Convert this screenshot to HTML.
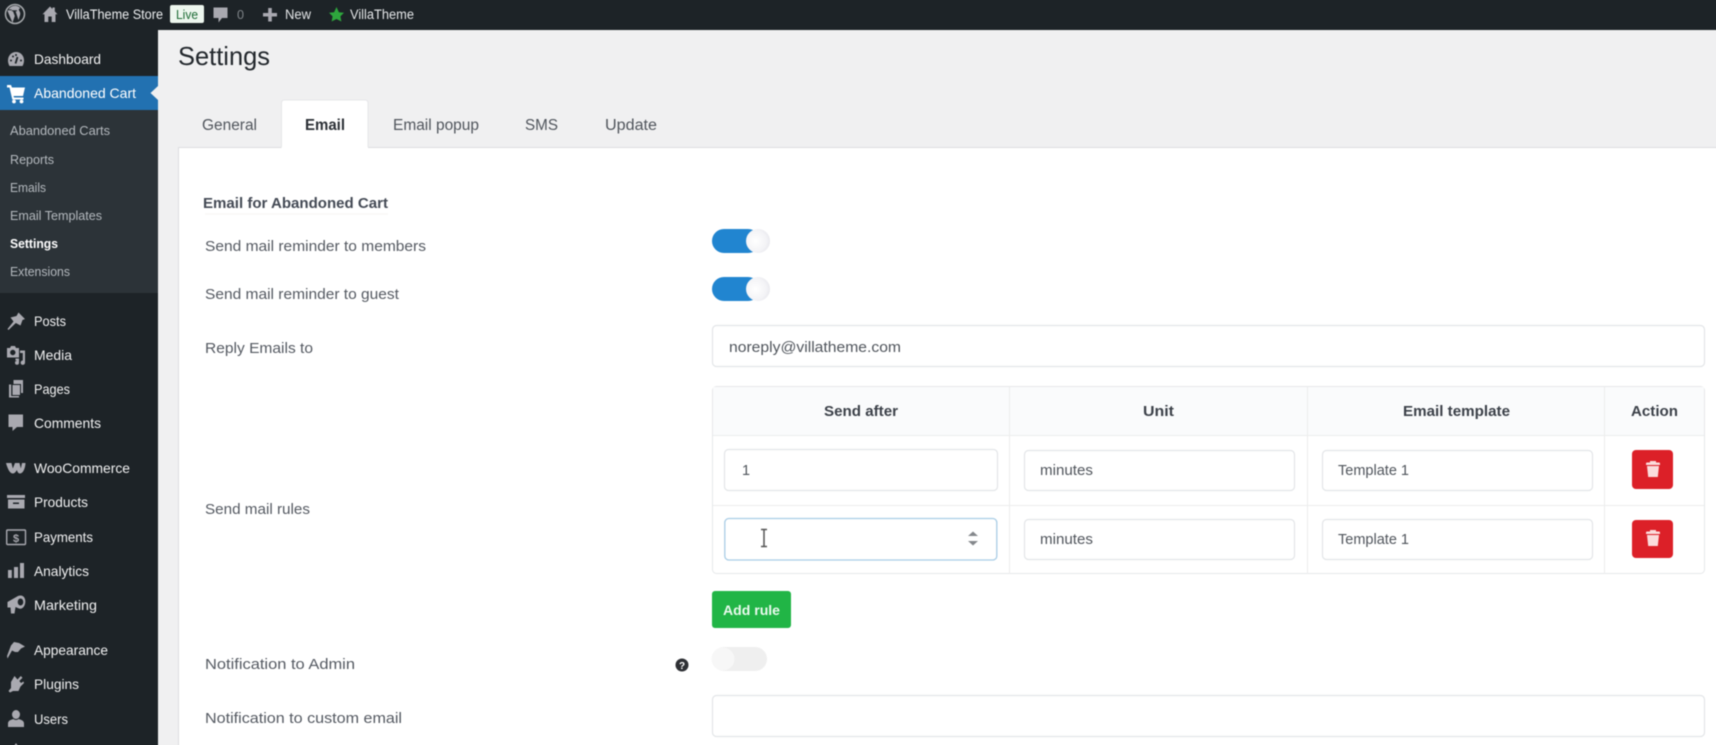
<!DOCTYPE html>
<html lang="en"><head><meta charset="utf-8"><title>Settings</title>
<style>
html,body{margin:0;padding:0;width:1716px;height:745px;overflow:hidden;background:#f0f0f1}
#w{position:relative;width:1716px;height:745px;overflow:hidden;contain:paint}
svg{display:block;position:absolute;left:-6px;top:-6px;filter:blur(.45px)}
text{font-family:"Liberation Sans",sans-serif;white-space:pre}
.m{font-size:14px;fill:#f0f0f1}
.s{font-size:13px;fill:#b4b9be}
.l{font-size:15px;fill:#555a62}
.t{font-size:15.5px;fill:#50555c}
.h{font-size:15px;font-weight:bold;fill:#3c4149}
.v{font-size:14.5px;fill:#50555c}
.ic{fill:#a9a9b0}
.b{fill:#fff;stroke:#e3e5e8;stroke-width:1.2}
</style></head><body><div id="w">
<svg width="1728" height="757" viewBox="-6 -6 1728 757" xmlns="http://www.w3.org/2000/svg">
<defs>
<radialGradient id="k" cx=".4" cy=".5" r=".6"><stop offset="0" stop-color="#fff"/><stop offset=".75" stop-color="#f3f3f6"/><stop offset="1" stop-color="#e9e9ee"/></radialGradient>
</defs>
<rect x="-6" y="-6" width="1728" height="757" fill="#f0f0f1"/>
<!-- admin bar -->
<rect x="-6" y="-6" width="1728" height="36" fill="#1d2327"/>
<!-- wp logo -->
<circle cx="15" cy="14" r="9.500" fill="none" stroke="#a7aaad" stroke-width="1.500"/>
<path class="ic" d="M7.500 11 12.500 22.800 14.800 16 13 11.200H11.800V10.300H17V11.200H15.600L18.500 20 20 15.200C20.800 12.800 19.600 11.600 19 10.400 18.500 9.200 19.400 8.400 20.400 8.400 18.600 6.300 16.800 5.800 15 5.800 12.400 5.800 10 7.200 8.600 9.400H11.600V10.300H7.800Z"/>
<!-- home -->
<path class="ic" d="M50 6.500 42.500 14.200H44.500V22H48.300V16.500H51.700V22H55.500V14.200H57.500L54.800 11.400V7.500H52.500V9Z"/>
<text x="66" y="19" font-size="13.500" fill="#eceef0" textLength="97" lengthAdjust="spacingAndGlyphs">VillaTheme Store</text>
<rect x="170" y="5" width="34" height="18" rx="2" fill="#edf6ee"/>
<text x="176" y="19" font-size="13" fill="#1c6b34" textLength="22" lengthAdjust="spacingAndGlyphs">Live</text>
<path class="ic" d="M213.500 7.500H227.500V18H222L218.500 22.500V18H213.500Z"/>
<text x="237" y="19" font-size="13" fill="#7f8589" textLength="7" lengthAdjust="spacingAndGlyphs">0</text>
<path class="ic" d="M268.200 8H271.800V13H277V16.500H271.800V21.500H268.200V16.500H263V13H268.200Z"/>
<text x="285" y="19" font-size="13.500" fill="#e4e6e8" textLength="26" lengthAdjust="spacingAndGlyphs">New</text>
<path fill="#2ea63d" d="M336.500 7 338.900 12.200 344 12.800 340.400 16.400 341.400 21.500 336.500 19 331.600 21.500 332.600 16.400 329 12.800 334.100 12.200Z"/>
<text x="350" y="19" font-size="13.500" fill="#e4e6e8" textLength="64" lengthAdjust="spacingAndGlyphs">VillaTheme</text>
<!-- sidebar -->
<rect x="-6" y="30" width="164" height="721" fill="#1d2327"/>
<rect x="-6" y="76" width="164" height="34" fill="#2271b1"/>
<rect x="-6" y="110" width="164" height="183" fill="#2c3338"/>
<path d="M158 86 150.500 93 158 100Z" fill="#f0f0f1"/>
<!-- dashboard icon -->
<path class="ic" d="M16 52C11 52 8 56 8 60.500C8 62.500 8.600 64.300 9.500 66H22.500C23.400 64.300 24 62.500 24 60.500C24 56 21 52 16 52Z"/>
<path d="M15.500 63.500 17.500 57" stroke="#1d2327" stroke-width="1.800" fill="none"/>
<circle cx="11" cy="60.500" r="1" fill="#1d2327"/><circle cx="13" cy="56.500" r="1" fill="#1d2327"/><circle cx="21" cy="60.500" r="1" fill="#1d2327"/><circle cx="16" cy="55" r="1" fill="#1d2327"/>
<text class="m" x="34" y="64" textLength="67" lengthAdjust="spacingAndGlyphs">Dashboard</text>
<!-- cart -->
<path fill="#fff" d="M7 85H11L12 87.500H25L23 96H13.500L14 97.500H23.500V99.500H12.300L9.500 87.500H7Z"/>
<circle cx="14" cy="101.500" r="1.900" fill="#fff"/><circle cx="21.500" cy="101.500" r="1.900" fill="#fff"/>
<text x="34" y="98" font-size="14" fill="#fff" textLength="102" lengthAdjust="spacingAndGlyphs">Abandoned Cart</text>
<text class="s" x="10" y="135" textLength="100" lengthAdjust="spacingAndGlyphs">Abandoned Carts</text>
<text class="s" x="10" y="164" textLength="44" lengthAdjust="spacingAndGlyphs">Reports</text>
<text class="s" x="10" y="192" textLength="36" lengthAdjust="spacingAndGlyphs">Emails</text>
<text class="s" x="10" y="220" textLength="92" lengthAdjust="spacingAndGlyphs">Email Templates</text>
<text x="10" y="248" font-size="13" font-weight="bold" fill="#fff" textLength="48" lengthAdjust="spacingAndGlyphs">Settings</text>
<text class="s" x="10" y="276" textLength="60" lengthAdjust="spacingAndGlyphs">Extensions</text>
<!-- posts -->
<path class="ic" d="M18.500 312.500 25 319 22.500 320 20.500 325.500 15.800 323 8.500 330 7.500 329 13.500 321.500 10.500 317.500 16.500 316Z"/>
<text class="m" x="34" y="326" textLength="32" lengthAdjust="spacingAndGlyphs">Posts</text>
<!-- media -->
<path class="ic" fill-rule="evenodd" d="M7 348H10L11 346H15L16 348H19V357.500H7ZM12.800 349.800A2.700 2.700 0 1 0 12.801 355.200 2.700 2.700 0 1 0 12.800 349.800Z"/>
<path class="ic" d="M20 350.500H25V362.500A2.200 2.200 0 1 1 22.800 360.500V353H20ZM15.500 358.500H19V362.800A2 2 0 1 1 17 360.800V360.500H15.500Z"/>
<text class="m" x="34" y="360" textLength="38" lengthAdjust="spacingAndGlyphs">Media</text>
<!-- pages -->
<path class="ic" d="M13.500 380H23V393H21V384H13.500ZM9 384.500H11.200V396H19V397.500H9Z"/>
<path class="ic" d="M12.500 385H20V395H12.500Z"/>
<text class="m" x="34" y="394" textLength="36" lengthAdjust="spacingAndGlyphs">Pages</text>
<!-- comments -->
<path class="ic" d="M8.500 414.500H23V427H17L12.500 431V427H8.500Z"/>
<text class="m" x="34" y="428" textLength="67" lengthAdjust="spacingAndGlyphs">Comments</text>
<!-- woo -->
<path class="ic" d="M6 463H11.500L12.800 468.500 15 463H19.500L20.800 468.500 22 463H25.500C25.300 467.500 23.500 473.500 19.800 473.500 18.200 473.500 17.300 471.500 16.800 470 15.800 472 14.500 473.500 12.800 473.500 9.500 473.500 7.200 467.500 6 463Z"/>
<text class="m" x="34" y="473" textLength="96" lengthAdjust="spacingAndGlyphs">WooCommerce</text>
<!-- products -->
<path class="ic" fill-rule="evenodd" d="M7 495H25V498H7ZM8 499.500H24.500V508.500H8ZM13 502.500V504H19V502.500Z"/>
<text class="m" x="34" y="507" textLength="54" lengthAdjust="spacingAndGlyphs">Products</text>
<!-- payments -->
<rect x="6.700" y="530" width="18.800" height="14.500" rx="1" fill="none" stroke="#a9a9b0" stroke-width="1.400"/>
<text x="16" y="542" font-size="11" font-weight="bold" fill="#a9a9b0" text-anchor="middle">$</text>
<text class="m" x="34" y="542" textLength="59" lengthAdjust="spacingAndGlyphs">Payments</text>
<!-- analytics -->
<path class="ic" d="M8 570H11.800V578H8ZM14 567H18V578H14ZM20 563H24V578H20Z"/>
<text class="m" x="34" y="576" textLength="55" lengthAdjust="spacingAndGlyphs">Analytics</text>
<!-- marketing -->
<path class="ic" fill-rule="evenodd" d="M7.500 602 18 596C23 594 26 598 25.200 603 24.500 607 22 609.500 19 608.500L15.500 607 14.500 613.500H11L10.500 607.500 7.500 607.500ZM20.500 598.500A2.800 3.500 0 1 0 20.501 605.500 2.800 3.500 0 1 0 20.500 598.500Z"/>
<text class="m" x="34" y="610" textLength="63" lengthAdjust="spacingAndGlyphs">Marketing</text>
<!-- appearance -->
<path class="ic" d="M11 645.500 14 642 19 643 25 646.500 21 648.500 18 652 15 652 12 650.500 7.500 658.500 7 656Z"/>
<text class="m" x="34" y="655" textLength="74" lengthAdjust="spacingAndGlyphs">Appearance</text>
<!-- plugins -->
<path class="ic" d="M14.500 676 17.500 679.500 20.800 676 22.500 677.800 19.300 681 21 683 23.500 681.500 24 683 20.500 686.500 18.500 691H13L10 692.500 8.500 691 11 688 11 682Z"/>
<text class="m" x="34" y="689" textLength="45" lengthAdjust="spacingAndGlyphs">Plugins</text>
<!-- users -->
<ellipse cx="16" cy="714.500" rx="4" ry="4.500" class="ic"/>
<path class="ic" d="M8 727V723.500C8 720.500 11 719.800 13.500 719 14.500 720.300 17.500 720.300 18.500 719 21 719.800 24 720.500 24 723.500V727Z"/>
<text class="m" x="34" y="724" textLength="34" lengthAdjust="spacingAndGlyphs">Users</text>
<path class="ic" d="M16 743 21 751H11Z"/>
<!-- heading -->
<text x="178" y="65" font-size="26" fill="#23282d" textLength="92" lengthAdjust="spacingAndGlyphs">Settings</text>
<!-- panel -->
<rect x="178.500" y="147.500" width="1560" height="620" fill="#fff" stroke="#dcdde0"/>
<path d="M281.500 148V103Q281.500 100 284.500 100H365Q368 100 368 103V148Z" fill="#fff"/>
<path d="M281.500 147V103Q281.500 100 284.500 100H365Q368 100 368 103V147" fill="none" stroke="#e6e7e9"/>
<text class="t" x="202" y="130" textLength="55" lengthAdjust="spacingAndGlyphs">General</text>
<text x="305" y="130" font-size="15.500" font-weight="bold" fill="#2c3036" textLength="40" lengthAdjust="spacingAndGlyphs">Email</text>
<text class="t" x="393" y="130" textLength="86" lengthAdjust="spacingAndGlyphs">Email popup</text>
<text class="t" x="525" y="130" textLength="33" lengthAdjust="spacingAndGlyphs">SMS</text>
<text class="t" x="605" y="130" textLength="52" lengthAdjust="spacingAndGlyphs">Update</text>
<text x="203" y="208" font-size="14.500" font-weight="bold" fill="#444a55" textLength="185" lengthAdjust="spacingAndGlyphs">Email for Abandoned Cart</text>
<path d="M205 214H388" stroke="#f6f4f2"/>
<text class="l" x="205" y="251" textLength="221" lengthAdjust="spacingAndGlyphs">Send mail reminder to members</text>
<text class="l" x="205" y="299" textLength="194" lengthAdjust="spacingAndGlyphs">Send mail reminder to guest</text>
<text class="l" x="205" y="353" textLength="108" lengthAdjust="spacingAndGlyphs">Reply Emails to</text>
<text class="l" x="205" y="514" textLength="105" lengthAdjust="spacingAndGlyphs">Send mail rules</text>
<text class="l" x="205" y="669" textLength="150" lengthAdjust="spacingAndGlyphs">Notification to Admin</text>
<text class="l" x="205" y="723" textLength="197" lengthAdjust="spacingAndGlyphs">Notification to custom email</text>
<!-- toggles -->
<rect x="712" y="229" width="48" height="24" rx="12" fill="#2185d0"/>
<circle cx="758" cy="241" r="12" fill="url(#k)"/>
<rect x="712" y="277" width="48" height="24" rx="12" fill="#2185d0"/>
<circle cx="758" cy="289" r="12" fill="url(#k)"/>
<rect x="712" y="647" width="55" height="24" rx="12" fill="#efefef"/>
<circle cx="723" cy="659" r="11.500" fill="#f7f7f7"/>
<!-- reply input -->
<rect class="b" x="712.500" y="325.500" width="992" height="41" rx="4"/>
<text class="v" x="729" y="352" textLength="172" lengthAdjust="spacingAndGlyphs">noreply@villatheme.com</text>
<!-- table -->
<rect x="712.500" y="386.500" width="992" height="187" rx="4" fill="#fff" stroke="#e6e8ea"/>
<path d="M714 387H1703Q1704 387 1704 389V435H713V389Q713 387 714 387Z" fill="#fafbfc"/>
<path d="M713 435.500H1704M713 505.500H1704M1009.500 387V574M1307.500 387V574M1604.500 387V574" stroke="#eceded" fill="none"/>
<text class="h" x="824" y="416" textLength="74" lengthAdjust="spacingAndGlyphs">Send after</text>
<text class="h" x="1143" y="416" textLength="31" lengthAdjust="spacingAndGlyphs">Unit</text>
<text class="h" x="1403" y="416" textLength="107" lengthAdjust="spacingAndGlyphs">Email template</text>
<text class="h" x="1631" y="416" textLength="47" lengthAdjust="spacingAndGlyphs">Action</text>
<!-- row1 -->
<rect class="b" x="724.500" y="449.500" width="273" height="41" rx="4"/>
<text class="v" x="742" y="475">1</text>
<rect class="b" x="1024.500" y="450.500" width="270" height="40" rx="4"/>
<text class="v" x="1040" y="475" textLength="53" lengthAdjust="spacingAndGlyphs">minutes</text>
<rect class="b" x="1322.500" y="450.500" width="270" height="40" rx="4"/>
<text class="v" x="1338" y="475" textLength="71" lengthAdjust="spacingAndGlyphs">Template 1</text>
<rect x="1632" y="450" width="41" height="39" rx="4" fill="#dc2028"/>
<path fill="#fbdcdc" d="M1646 463.500Q1646 462.500 1647 462.500H1650V461H1656V462.500H1659Q1660 462.500 1660 463.500V465H1646ZM1647 466H1659L1657.800 477H1648.200Z"/>
<!-- row2 -->
<rect x="724.800" y="518.500" width="272" height="41.500" rx="4" fill="#fff" stroke="#a9cde6" stroke-width="1.300"/>
<path d="M761 529.500H767M761 546.500H767M764 529.500V546.500" stroke="#555" stroke-width="1.500" fill="none"/>
<path d="M968 536 973 531.500 978 536ZM968 541H978L973 545.500Z" fill="#85888c"/>
<rect class="b" x="1024.500" y="519.500" width="270" height="40" rx="4"/>
<text class="v" x="1040" y="544" textLength="53" lengthAdjust="spacingAndGlyphs">minutes</text>
<rect class="b" x="1322.500" y="519.500" width="270" height="40" rx="4"/>
<text class="v" x="1338" y="544" textLength="71" lengthAdjust="spacingAndGlyphs">Template 1</text>
<rect x="1632" y="520" width="41" height="38" rx="4" fill="#dc2028"/>
<path fill="#fbdcdc" d="M1646 532.500Q1646 531.500 1647 531.500H1650V530H1656V531.500H1659Q1660 531.500 1660 532.500V534H1646ZM1647 535H1659L1657.800 546H1648.200Z"/>
<!-- add rule -->
<rect x="712" y="591" width="79" height="37" rx="3" fill="#21b546"/>
<text x="723" y="615" font-size="14" font-weight="bold" fill="#eafaee" textLength="57" lengthAdjust="spacingAndGlyphs">Add rule</text>
<!-- help -->
<circle cx="682" cy="665" r="6.500" fill="#2e3034"/>
<text x="682" y="669" font-size="10" font-weight="bold" fill="#fff" text-anchor="middle">?</text>
<!-- custom email -->
<rect class="b" x="712.500" y="695.500" width="992" height="41" rx="4"/>
</svg>
</div></body></html>
